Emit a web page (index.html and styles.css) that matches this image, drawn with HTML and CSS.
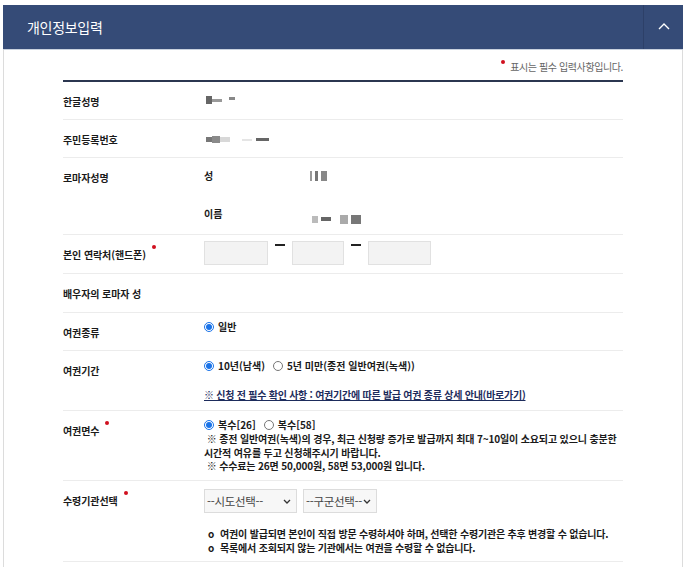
FILE: index.html
```html
<!DOCTYPE html>
<html lang="ko">
<head>
<meta charset="utf-8">
<title>개인정보입력</title>
<link rel="stylesheet" href="styles.css">
</head>
<body>
<section class="panel">
  <header class="panel-head">
    <h2 class="panel-title">개인정보입력</h2>
    <button class="toggle" type="button" aria-label="접기">
      <svg width="12" height="8" viewBox="0 0 12 8"><polyline points="1,7 6,2 11,7" fill="none" stroke="#fff" stroke-width="1.4"/></svg>
    </button>
  </header>
  <div class="panel-body">
    <p class="req-note"><span class="dot"></span>표시는 필수 입력사항입니다.</p>
    <div class="form">
      <div class="row r38">
        <div class="label">한글성명</div>
        <div class="value simple">
          <span class="masked masked-a"><i class="b1"></i><i class="b2"></i><i class="b3"></i></span>
        </div>
      </div>
      <div class="row r38">
        <div class="label">주민등록번호</div>
        <div class="value simple">
          <span class="masked masked-b"><i class="c1"></i><i class="c2"></i><i class="c3"></i><i class="c4"></i><i class="c5"></i></span>
        </div>
      </div>
      <div class="row">
        <div class="label">로마자성명</div>
        <div class="value sub">
          <div class="sub-row"><span class="sub-label">성</span><span class="masked masked-c"><i class="d1"></i><i class="d2"></i><i class="d3"></i></span></div>
          <div class="sub-row"><span class="sub-label">이름</span><span class="masked masked-d"><i class="e1"></i><i class="e2"></i><i class="e3"></i><i class="e4"></i></span></div>
        </div>
      </div>
      <div class="row r39">
        <div class="label">본인 연락처(핸드폰)<span class="req"></span></div>
        <div class="value phone">
          <input class="tel t1" type="text" aria-label="앞자리">
          <span class="dash"></span>
          <input class="tel t2" type="text" aria-label="가운데자리">
          <span class="dash"></span>
          <input class="tel t3" type="text" aria-label="뒷자리">
        </div>
      </div>
      <div class="row r39">
        <div class="label">배우자의 로마자 성</div>
        <div class="value"></div>
      </div>
      <div class="row r38">
        <div class="label">여권종류</div>
        <div class="value opts">
          <div class="radio-line">
            <label class="radio"><input type="radio" name="kind" checked>일반</label>
          </div>
        </div>
      </div>
      <div class="row r60">
        <div class="label">여권기간</div>
        <div class="value opts period">
          <div class="radio-line">
            <label class="radio"><input type="radio" name="term" checked>10년(남색)</label>
            <label class="radio"><input type="radio" name="term">5년 미만(종전 일반여권(녹색))</label>
          </div>
          <a class="guide" href="#">※ 신청 전 필수 확인 사항 : 여권기간에 따른 발급 여권 종류 상세 안내(바로가기)</a>
        </div>
      </div>
      <div class="row r70">
        <div class="label">여권면수<span class="req"></span></div>
        <div class="value opts pages">
          <div class="radio-line">
            <label class="radio"><input type="radio" name="pages" checked>복수[26]</label>
            <label class="radio"><input type="radio" name="pages">복수[58]</label>
          </div>
          <p class="desc">&nbsp;※ 종전 일반여권(녹색)의 경우, 최근 신청량 증가로 발급까지 최대 7~10일이 소요되고 있으니 충분한<br>시간적 여유를 두고 신청해주시기 바랍니다.<br>&nbsp;※ 수수료는 26면 50,000원, 58면 53,000원 입니다.</p>
        </div>
      </div>
      <div class="row r81">
        <div class="label">수령기관선택<span class="req"></span></div>
        <div class="value office">
          <div class="selects">
            <div class="select-wrap w1">
              <select aria-label="시도선택"><option>--시도선택--</option></select>
              <svg class="caret" width="8" height="5" viewBox="0 0 8 5"><polyline points="1,1 4,4 7,1" fill="none" stroke="#333" stroke-width="1.3"/></svg>
            </div>
            <div class="select-wrap w2">
              <select aria-label="구군선택"><option>--구군선택--</option></select>
              <svg class="caret" width="8" height="5" viewBox="0 0 8 5"><polyline points="1,1 4,4 7,1" fill="none" stroke="#333" stroke-width="1.3"/></svg>
            </div>
          </div>
          <ul class="notes">
            <li>여권이 발급되면 본인이 직접 방문 수령하셔야 하며, 선택한 수령기관은 추후 변경할 수 없습니다.</li>
            <li>목록에서 조회되지 않는 기관에서는 여권을 수령할 수 없습니다.</li>
          </ul>
        </div>
      </div>
    </div>
  </div>
</section>
</body>
</html>
```
FILE: styles.css
```css
* { box-sizing: border-box; }
body {
  margin: 0;
  background: #fff;
  font-family: "Noto Sans CJK KR", "Noto Sans", sans-serif;
  color: #222;
}
.panel {
  width: 680px;
  margin: 5px 0 0 3px;
  border-left: 1px solid #dcdcdc;
  border-right: 1px solid #dcdcdc;
}
.panel-head {
  height: 45px;
  background: #354b77;
  display: flex;
  align-items: stretch;
  justify-content: space-between;
  border-bottom: 1px solid #c9d1de;
  margin: 0 -1px;
}
.panel-title {
  margin: 0;
  padding-left: 24px;
  display: flex;
  align-items: center;
  font-size: 14px;
  font-weight: normal;
  color: #fff;
  letter-spacing: -0.3px;
}
.toggle {
  width: 40px;
  border: 0;
  border-left: 1px solid #2d4068;
  background: transparent;
  display: flex;
  align-items: center;
  justify-content: center;
  padding: 0 0 2px 0;
}
.panel-body {
  padding: 0 59px 0 59px;
  height: 517px;
}
.req-note {
  margin: 0;
  height: 30px;
  display: flex;
  justify-content: flex-end;
  align-items: center;
  padding-top: 2px;
  font-size: 10px;
  color: #666;
  letter-spacing: -0.4px;
}
.req-note .dot {
  width: 4px;
  height: 4px;
  border-radius: 50%;
  background: #d0101e;
  margin: 0 5px 8px 0;
}
.form {
  border-top: 2px solid #2b3650;
}
.row {
  display: grid;
  grid-template-columns: 141px 1fr;
  border-bottom: 1px solid #ececec;
}
.r38 { height: 38px; }
.r39 { height: 39px; }
.r60 { height: 60px; }
.r70 { height: 70px; }
.r81 { height: 81px; }
.label {
  padding-top: 14px;
  font-size: 10px;
  line-height: 12px;
  font-weight: bold;
  color: #1a1a1a;
  letter-spacing: -0.1px;
  white-space: nowrap;
}
.req {
  display: inline-block;
  width: 4px;
  height: 4px;
  border-radius: 50%;
  background: #d0101e;
  margin-left: 6px;
  position: relative;
  top: -10px;
}
.value {
  font-size: 10px;
  line-height: 12px;
  color: #1a1a1a;
}
.value.simple { padding-top: 12px; }
.masked { display: inline-flex; align-items: center; gap: 0; height: 10px; }
.masked i { display: block; height: 3px; background: #9a9a9a; }
.masked-a { margin-left: 2px; }
.masked-a .b1 { width: 6px; height: 8px; background: #666; }
.masked-a .b2 { width: 10px; background: #999; }
.masked-a .b3 { width: 6px; background: #888; margin-left: 7px; margin-top: -3px; }
.masked-b { margin-left: 2px; }
.masked-b .c1 { width: 6px; height: 5px; background: #777; }
.masked-b .c2 { width: 8px; height: 7px; background: #8a8a8a; }
.masked-b .c3 { width: 10px; height: 5px; background: #d8d8d8; }
.masked-b .c4 { width: 10px; height: 2px; background: #e5e5e5; margin-left: 12px; }
.masked-b .c5 { width: 13px; background: #666; margin-left: 4px; }
.value.sub { display: flex; flex-direction: column; }
.sub-row {
  height: 38px;
  display: flex;
  align-items: center;
  padding-bottom: 2px;
}
.sub-label { width: 106px; font-weight: bold; }
.masked-c { gap: 3px; }
.masked-c .d1 { width: 2px; height: 10px; background: #999; }
.masked-c .d2 { width: 3px; height: 10px; background: #777; }
.masked-c .d3 { width: 6px; height: 10px; background: #888; }
.masked-d { gap: 3px; margin-top: 10px; margin-left: 2px; }
.masked-d .e1 { width: 6px; height: 7px; background: #bbb; }
.masked-d .e2 { width: 10px; height: 4px; background: #666; }
.masked-d .e3 { width: 8px; height: 9px; background: #aaa; margin-left: 6px; }
.masked-d .e4 { width: 10px; height: 9px; background: #777; }
.value.phone {
  display: flex;
  align-items: flex-start;
  padding-top: 6px;
}
.tel {
  height: 24px;
  border: 1px solid #e1e1e1;
  background: #f3f3f3;
  padding: 0;
}
.t1 { width: 64px; }
.t2 { width: 52px; }
.t3 { width: 63px; }
.dash {
  width: 10px;
  height: 1.5px;
  background: #222;
  margin: 3px 7px 0 7px;
}
.value.opts { padding-top: 7px; }
.radio-line { display: flex; gap: 8px; height: 13px; align-items: center; }
.radio {
  display: inline-flex;
  align-items: center;
  font-weight: bold;
  white-space: nowrap;
}
.radio input {
  width: 10px;
  height: 10px;
  margin: 0 4px 0 0;
  accent-color: #1a73e8;
}
.period .radio-line { margin-top: 1px; }
.guide {
  display: block;
  width: max-content;
  margin-top: 17px;
  color: #1d2c5c;
  font-weight: bold;
  text-decoration: underline;
  letter-spacing: -0.25px;
  white-space: nowrap;
}
.desc {
  margin: 1px 0 0 0;
  line-height: 13.5px;
  font-weight: bold;
  letter-spacing: -0.15px;
  white-space: nowrap;
}
.value.office { padding-top: 8px; }
.selects { display: flex; gap: 6px; }
.select-wrap { position: relative; height: 24px; }
.select-wrap.w1 { width: 93px; }
.select-wrap.w2 { width: 74px; }
.select-wrap select {
  appearance: none;
  -webkit-appearance: none;
  width: 100%;
  height: 24px;
  border: 1px solid #dcdcdc;
  background: #f7f7f7;
  font-family: inherit;
  font-size: 11.5px;
  color: #444;
  padding: 0 0 0 2px;
  letter-spacing: -0.3px;
}
.caret { position: absolute; right: 6px; top: 10px; pointer-events: none; }
.notes {
  list-style: none;
  margin: 14px 0 0 0;
  padding: 0 0 0 4px;
  line-height: 14px;
  font-weight: bold;
  letter-spacing: -0.2px;
  white-space: nowrap;
}
.notes li::before {
  content: "o";
  margin-right: 6px;
}
```
